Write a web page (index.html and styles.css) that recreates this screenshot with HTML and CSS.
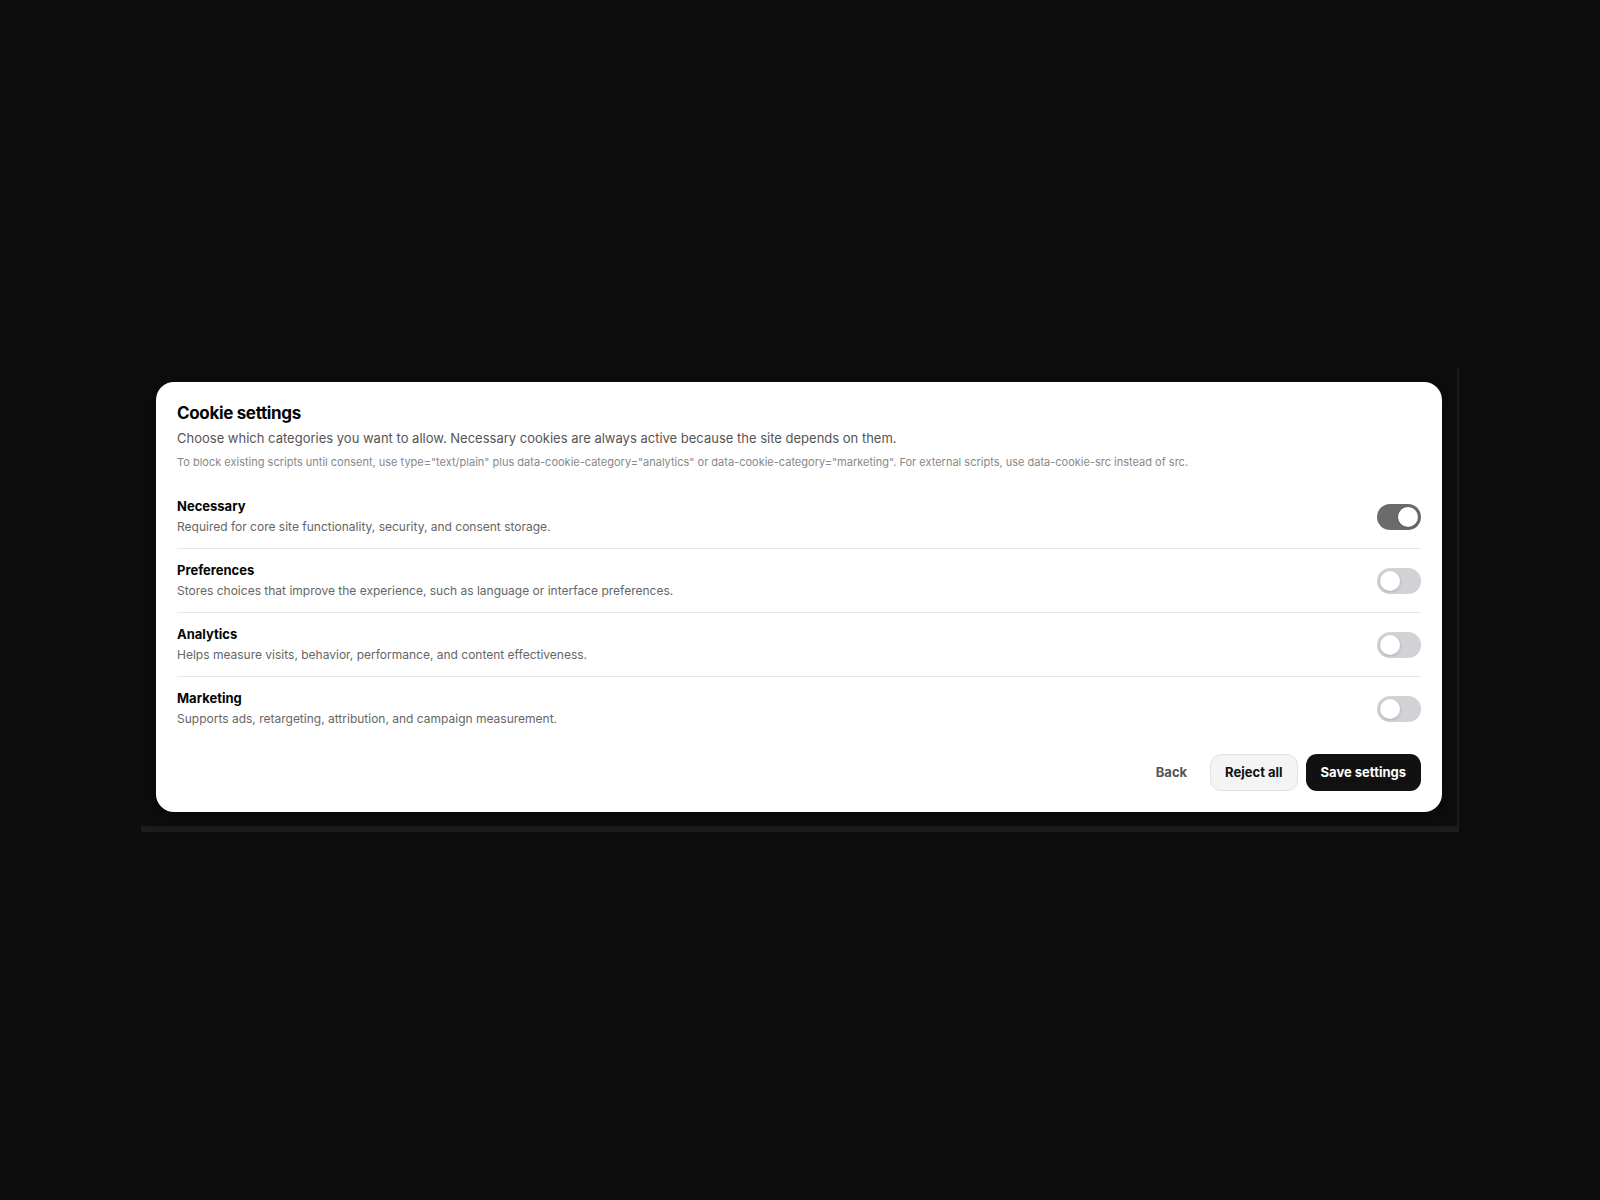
FILE: index.html
```html
<!DOCTYPE html>
<html lang="en">
<head>
    <meta charset="UTF-8">
    <meta name="viewport" content="width=device-width, initial-scale=1.0">
    <title>Cookie settings</title>
    <link rel="stylesheet" href="styles.css">
</head>
<body>
    <div class="cookie-frame">
        <form class="cookie-card">
            <h1>Cookie settings</h1>
            <p class="cookie-intro">Choose which categories you want to allow. Necessary cookies are always active because the site depends on them.</p>
            <p class="cookie-note">To block existing scripts until consent, use type="text/plain" plus data-cookie-category="analytics" or data-cookie-category="marketing". For external scripts, use data-cookie-src instead of src.</p>

            <div class="cookie-list">
                <div class="cookie-row">
                    <div class="cookie-text">
                        <label for="necessary">Necessary</label>
                        <p>Required for core site functionality, security, and consent storage.</p>
                    </div>
                    <input type="checkbox" class="toggle" id="necessary" checked disabled>
                </div>
                <div class="cookie-row">
                    <div class="cookie-text">
                        <label for="preferences">Preferences</label>
                        <p>Stores choices that improve the experience, such as language or interface preferences.</p>
                    </div>
                    <input type="checkbox" class="toggle" id="preferences">
                </div>
                <div class="cookie-row">
                    <div class="cookie-text">
                        <label for="analytics">Analytics</label>
                        <p>Helps measure visits, behavior, performance, and content effectiveness.</p>
                    </div>
                    <input type="checkbox" class="toggle" id="analytics">
                </div>
                <div class="cookie-row">
                    <div class="cookie-text">
                        <label for="marketing">Marketing</label>
                        <p>Supports ads, retargeting, attribution, and campaign measurement.</p>
                    </div>
                    <input type="checkbox" class="toggle" id="marketing">
                </div>
            </div>

            <div class="cookie-actions">
                <button type="button" class="btn btn-ghost">Back</button>
                <button type="button" class="btn btn-light">Reject all</button>
                <button type="button" class="btn btn-dark">Save settings</button>
            </div>
        </form>
    </div>
</body>
</html>
```
FILE: styles.css
```css
* {
    box-sizing: border-box;
}

body {
    font-family: Inter, "Liberation Sans", sans-serif;
    display: flex;
    align-items: center;
    min-height: 100vh;
    margin: 0;
    padding: 20px 141px;
    background-color: #0d0d0d;
    color: #050505;
}

h1, p {
    margin: 0;
}

.cookie-frame {
    flex: 1;
    padding: 14px 15px;
    border-right: 2px solid #1c1c1c;
    border-bottom: 6px solid #1c1c1c;
}

.cookie-card {
    padding: 21px;
    background-color: #fff;
    border-radius: 18px;
    box-shadow: 0 2px 14px rgba(0, 0, 0, 0.5);
}

h1 {
    font-size: 17px;
    line-height: 20px;
    letter-spacing: -0.02em;
}

.cookie-intro {
    margin-top: 5px;
    font-size: 13px;
    line-height: 20px;
    color: #555;
}

.cookie-note {
    margin-top: 6px;
    font-size: 11px;
    line-height: 16px;
    color: #888;
}

.cookie-list {
    margin: 15px 0 14px;
}

.cookie-row {
    display: flex;
    align-items: center;
    justify-content: space-between;
    gap: 16px;
    padding: 12px 0;
    border-bottom: 1px solid #e6e6e8;
}

.cookie-row:last-child {
    border-bottom: none;
}

.cookie-text label {
    display: block;
    margin-bottom: 3px;
    font-size: 13px;
    font-weight: 700;
    line-height: 18px;
}

.cookie-text p {
    font-size: 12px;
    line-height: 18px;
    color: #666;
}

.toggle {
    appearance: none;
    display: flex;
    align-items: center;
    flex-shrink: 0;
    width: 44px;
    height: 26px;
    margin: 0;
    padding: 0 3px;
    border-radius: 13px;
    background-color: #d2d1d6;
    cursor: pointer;
}

.toggle::before {
    content: "";
    width: 20px;
    height: 20px;
    border-radius: 50%;
    background-color: #fff;
    box-shadow: 0 1px 3px rgba(0, 0, 0, 0.2);
}

.toggle:checked {
    justify-content: flex-end;
    background-color: #111;
}

.toggle:disabled {
    background-color: #6b6b6b;
    cursor: not-allowed;
}

.cookie-actions {
    display: flex;
    justify-content: flex-end;
    gap: 8px;
}

.btn {
    padding: 0 14px;
    border: 1px solid transparent;
    border-radius: 11px;
    font-family: inherit;
    font-size: 13px;
    font-weight: 700;
    line-height: 35px;
    cursor: pointer;
}

.btn-ghost {
    background-color: transparent;
    color: #555;
}

.btn-light {
    background-color: #f4f4f4;
    border-color: #e2e2e4;
    color: #111;
}

.btn-dark {
    background-color: #111;
    color: #fff;
}
```
